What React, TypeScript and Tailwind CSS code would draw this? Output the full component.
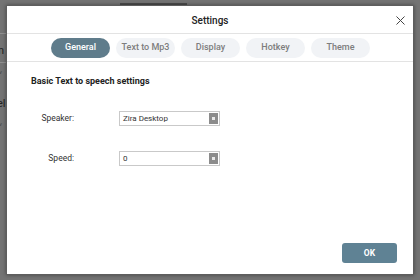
import { X } from 'lucide-react';

const tabs = ['General', 'Text to Mp3', 'Display', 'Hotkey', 'Theme'];

function Select({ value }: { value: string }) {
  return (
    <div className="flex h-[15px] w-[101px] items-stretch border border-[#c9c9c9] bg-white">
      <span className="flex-1 pl-[3px] text-[8px] leading-[13px] text-[#333]">{value}</span>
      <span className="m-[1px] flex w-[9px] items-center justify-center bg-[#8c8c8c]">
        <span className="h-[3px] w-[3px] bg-[#e8e8e8]" />
      </span>
    </div>
  );
}

export default function App() {
  return (
    <div
      className="relative h-[280px] w-[420px] overflow-hidden bg-[#737373]"
      style={{ fontFamily: 'Roboto, "Liberation Sans", sans-serif' }}
    >
      {/* page behind the dialog */}
      <div className="absolute left-[120px] top-[3px] h-[2px] w-[67px] bg-[#4a4a4a]" />
      <div className="absolute left-0 top-[33px] h-px w-[6px] bg-[#8f8f8f]" />
      <div className="absolute left-0 top-[62px] h-px w-[6px] bg-[#8f8f8f]" />
      <span className="absolute left-[-2px] top-[43px] text-[11px] text-[#222]">n</span>
      <span className="absolute left-[-1px] top-[67px] text-[6px] text-[#444]">v</span>
      <span className="absolute left-[-3px] top-[96px] text-[11px] text-[#222]">el</span>
      <span className="absolute left-[-1px] top-[119px] text-[6px] text-[#444]">v</span>

      <div className="absolute left-[6px] top-[5px] flex h-[270px] w-[408px] flex-col border border-[#5e5e5e] bg-white shadow-[0_0_4px_rgba(0,0,0,0.4)]">
        <div className="relative flex h-[28px] items-center justify-center border-b border-[#e3e3e3] pt-px">
          <span className="text-[10px] font-medium text-[#222]">Settings</span>
          <X className="absolute right-[5px] top-[7px] h-[15px] w-[15px] text-[#444]" strokeWidth={1.6} />
        </div>

        <div className="flex h-[28px] items-center justify-center gap-[6px] border-b border-[#e3e3e3] pl-px">
          {tabs.map((t, i) => (
            <div
              key={t}
              className={
                i === 0
                  ? 'flex h-[20px] w-[59px] items-center justify-center rounded-full bg-[#5f7c8b] text-[9px] font-medium text-white'
                  : 'flex h-[20px] w-[59px] items-center justify-center rounded-full bg-[#f1f3f6] text-[9px] font-medium text-[#7d7d7d]'
              }
            >
              {t}
            </div>
          ))}
        </div>

        <div className="flex flex-1 flex-col px-[24px] pt-[13px]">
          <h2 className="text-[9px] font-bold text-[#222]">Basic Text to speech settings</h2>

          <div className="mt-[22px] flex items-center">
            <span className="w-[43px] text-right text-[8.5px] text-[#333]">Speaker:</span>
            <div className="ml-[45px]">
              <Select value="Zira Desktop" />
            </div>
          </div>

          <div className="mt-[25px] flex items-center">
            <span className="w-[43px] text-right text-[8.5px] text-[#333]">Speed:</span>
            <div className="ml-[45px]">
              <Select value="0" />
            </div>
          </div>

          <div className="mt-auto mb-[11px] flex justify-end">
            <button className="-mr-[8px] h-[20px] w-[55px] rounded-[3px] bg-[#5f8294] text-[8.5px] font-bold text-white">
              OK
            </button>
          </div>
        </div>
      </div>
    </div>
  );
}
